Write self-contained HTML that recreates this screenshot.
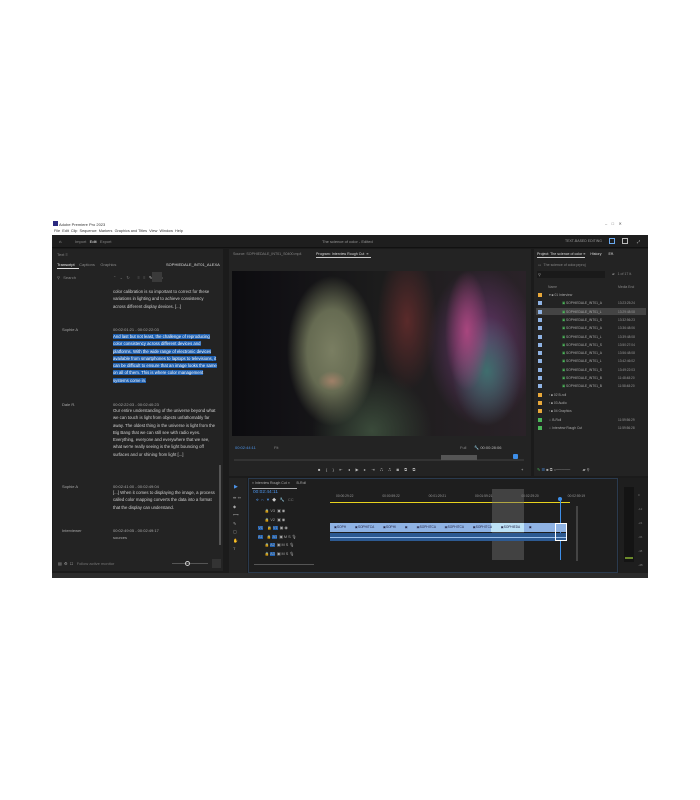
<!DOCTYPE html>
<html><head><meta charset="utf-8"><style>
*{margin:0;padding:0;box-sizing:border-box}
body{width:700px;height:800px;background:#fff;position:relative;overflow:hidden;font-family:"Liberation Sans",sans-serif}
.a{position:absolute}
.t{position:absolute;font-size:4px;color:#bbb;white-space:nowrap;line-height:5px}
.tr{font-size:4.3px;color:#d0d0d0;line-height:7.3px;position:absolute;width:104px}
.hl{background:#1d5fb0;color:#fff}
</style></head><body>
<div class="a" style="left:53px;top:221px;width:5px;height:5px;background:#2b2a80"></div>
<div class="t" style="left:59px;top:222px;color:#333">Adobe Premiere Pro 2023</div>
<div class="t" style="left:54px;top:229px;color:#333;font-size:3.8px">File &nbsp;Edit &nbsp;Clip &nbsp;Sequence &nbsp;Markers &nbsp;Graphics and Titles &nbsp;View &nbsp;Window &nbsp;Help</div>
<div class="t" style="left:605px;top:221px;color:#555">–&nbsp;&nbsp;&nbsp;&nbsp;□&nbsp;&nbsp;&nbsp;&nbsp;✕</div>
<div class="a" style="left:52px;top:235px;width:596px;height:343px;background:#1b1b1b"></div>
<div class="a" style="left:52px;top:235px;width:596px;height:13px;background:#1e1e1e;border-bottom:1px solid #111"></div>
<div class="t" style="left:59px;top:239px;color:#ddd">⌂</div>
<div class="t" style="left:75px;top:239px;color:#888">Import &nbsp;&nbsp;<span style="color:#eee">Edit</span>&nbsp;&nbsp; Export</div>
<div class="t" style="left:322px;top:239px;color:#999">The science of color - Edited</div>
<div class="t" style="left:565px;top:239px;color:#999;font-size:3.5px">TEXT-BASED EDITING</div>
<div class="a" style="left:609px;top:238px;width:6px;height:6px;border:1px solid #6aa9ef"></div>
<div class="a" style="left:622px;top:238px;width:6px;height:6px;border:1px solid #bbb"></div>
<div class="t" style="left:637px;top:239px;color:#bbb">⤢</div>
<div class="a" style="left:53px;top:249px;width:170px;height:322px;background:#232323"></div>
<div class="t" style="left:57px;top:252px;color:#888">Text ≡</div>
<div class="t" style="left:57px;top:262px;color:#eee">Transcript &nbsp;&nbsp;&nbsp;<span style="color:#888">Captions &nbsp;&nbsp;&nbsp;&nbsp;Graphics</span></div>
<div class="t" style="left:166px;top:262px;color:#ddd">SOPHIEDALE_INT01_ALEXA</div>
<div class="a" style="left:57px;top:268px;width:22px;height:1px;background:#ddd"></div>
<div class="t" style="left:57px;top:275px;color:#888">⚲ &nbsp;&nbsp;Search</div>
<div class="t" style="left:113px;top:275px;color:#777">⌃ &nbsp;&nbsp;⌄ &nbsp;&nbsp;↻ &nbsp;&nbsp;&nbsp;&nbsp;&nbsp;&nbsp;≡ &nbsp;&nbsp;≡ &nbsp;&nbsp;<span style="color:#ccc">✎</span> &nbsp;&nbsp;&nbsp;&nbsp;&nbsp;•••</div>
<div class="a" style="left:152px;top:272px;width:10px;height:10px;background:#3a3a3a"></div>
<div class="tr" style="left:113px;top:288px">color calibration is so important to correct for these variations in lighting and to achieve consistency across different display devices. [...]</div>
<div class="t" style="left:62px;top:327px;color:#aaa">Sophie A</div>
<div class="t" style="left:113px;top:327px;color:#aaa">00:02:01:21 - 00:02:22:03</div>
<div class="tr" style="left:113px;top:333px"><span class="hl">And last but not least, the challenge of reproducing color consistency across different devices and platforms. With the wide range of electronic devices available from smartphones to laptops to televisions, it can be difficult to ensure that an image looks the same on all of them. This is where color management systems come in.</span></div>
<div class="t" style="left:62px;top:402px;color:#aaa">Dale R.</div>
<div class="t" style="left:113px;top:402px;color:#aaa">00:02:22:03 - 00:02:40:23</div>
<div class="tr" style="left:113px;top:407px">Our entire understanding of the universe beyond what we can touch is light from objects unfathomably far away. The oldest thing in the universe is light from the Big Bang that we can still see with radio eyes. Everything, everyone and everywhere that we see, what we're really seeing is the light bouncing off surfaces and or shining from light [...]</div>
<div class="t" style="left:62px;top:484px;color:#aaa">Sophie A</div>
<div class="t" style="left:113px;top:484px;color:#aaa">00:02:41:00 - 00:02:49:04</div>
<div class="tr" style="left:113px;top:489px">[...] When it comes to displaying the image, a process called color mapping converts the data into a format that the display can understand.</div>
<div class="t" style="left:62px;top:528px;color:#aaa">Interviewer</div>
<div class="t" style="left:113px;top:528px;color:#aaa">00:02:49:05 - 00:02:49:17</div>
<div class="t" style="left:113px;top:535px;color:#aaa">sources</div>
<div class="a" style="left:219px;top:465px;width:2px;height:80px;background:#555"></div>
<div class="t" style="left:58px;top:561px;color:#aaa">▤ &nbsp;⚙ &nbsp;☐ &nbsp;&nbsp;<span style="color:#777">Follow active monitor</span></div>
<div class="a" style="left:172px;top:563px;width:36px;height:1px;background:#555"></div>
<div class="a" style="left:185px;top:561px;width:5px;height:5px;border:1px solid #ccc;border-radius:50%"></div>
<div class="a" style="left:212px;top:559px;width:9px;height:9px;background:#333"></div>
<div class="a" style="left:229px;top:249px;width:302px;height:227px;background:#232323"></div>
<div class="t" style="left:233px;top:252px;color:#888;font-size:3.6px">Source: SOPHIEDALE_INT01_S0400.mp4</div>
<div class="t" style="left:316px;top:252px;color:#ddd;font-size:3.6px">Program: Interview Rough Cut &nbsp;≡</div>
<div class="a" style="left:316px;top:257px;width:55px;height:1px;background:#ccc"></div>
<div class="a" style="left:232px;top:271px;width:294px;height:165px;background:
radial-gradient(ellipse 14px 10px at 100px 110px,#a08068 0%,rgba(120,100,80,0) 100%),
radial-gradient(ellipse 45px 75px at 100px 80px,#7a7e62 0%,#666b52 55%,rgba(50,54,42,0) 100%),
radial-gradient(ellipse 22px 60px at 235px 60px,#a8467e 0%,rgba(100,50,100,0) 100%),
radial-gradient(ellipse 35px 55px at 255px 100px,#3f6e6e 0%,rgba(40,70,70,0) 100%),
radial-gradient(ellipse 55px 80px at 250px 75px,#6a3870 0%,rgba(60,40,70,0) 100%),
radial-gradient(ellipse 30px 70px at 175px 50px,#5a2a2a 0%,rgba(60,30,30,0) 100%),
radial-gradient(ellipse 60px 60px at 140px 160px,#3a4a3a 0%,rgba(30,40,30,0) 100%),
linear-gradient(90deg,#0c0c0f 0%,#111014 15%,#1c1c1c 50%,#2a2228 100%)"></div>
<div class="t" style="left:235px;top:445px;color:#4c93e8">00:02:44:11</div>
<div class="t" style="left:274px;top:445px;color:#888">Fit</div>
<div class="t" style="left:460px;top:445px;color:#888">Full &nbsp;&nbsp;&nbsp;&nbsp;&nbsp;&nbsp;<span style="color:#bbb">🔧 00:00:28:06</span></div>
<div class="a" style="left:234px;top:459px;width:290px;height:2px;background:#333"></div>
<div class="a" style="left:441px;top:455px;width:36px;height:5px;background:#555"></div>
<div class="a" style="left:513px;top:454px;width:5px;height:5px;background:#3d8ee8;border-radius:1px"></div>
<div class="t" style="left:318px;top:467px;color:#bbb;letter-spacing:5.4px">■{}⇤◂▶▸⇥⎍⎍◙⧉⧉</div>
<div class="t" style="left:521px;top:467px;color:#ccc">+</div>
<div class="a" style="left:534px;top:249px;width:114px;height:227px;background:#232323"></div>
<div class="t" style="left:537px;top:252px;color:#ddd;font-size:3.6px">Project: The science of color ≡ &nbsp;&nbsp;&nbsp;&nbsp;History &nbsp;&nbsp;&nbsp;&nbsp;&nbsp;&nbsp;Eff.</div>
<div class="a" style="left:537px;top:257px;width:48px;height:1px;background:#ccc"></div>
<div class="t" style="left:538px;top:263px;color:#888;font-size:3.6px">▭ &nbsp;The science of color.prproj</div>
<div class="a" style="left:537px;top:271px;width:68px;height:7px;background:#1a1a1a"></div>
<div class="t" style="left:538px;top:272px;color:#999">⚲</div>
<div class="t" style="left:612px;top:272px;color:#888;font-size:3.5px">▰ &nbsp;&nbsp;1 of 17 it.</div>
<div class="t" style="left:548px;top:285px;color:#888;font-size:3.4px">Name</div>
<div class="t" style="left:618px;top:285px;color:#888;font-size:3.4px">Media End</div>
<div id="proj"></div>
<div class="a" style="left:229px;top:478px;width:18px;height:95px;background:#232323"></div>
<div class="t" style="left:234px;top:485px;color:#4c93e8;font-size:5px">▶</div>
<div class="t" style="left:233px;top:494px;color:#aaa;line-height:8.5px;width:8px;white-space:normal">⇹ ⇸ ◆ ⟷ ✎ ▢ ✋ T</div>
<div class="a" style="left:248px;top:478px;width:370px;height:95px;background:#1e1e1e;border:1px solid #2a3a4e"></div>
<div class="t" style="left:252px;top:481px;color:#aaa;font-size:3.5px">× Interview Rough Cut ≡ &nbsp;&nbsp;&nbsp;&nbsp;&nbsp;&nbsp;B-Roll</div>
<div class="a" style="left:252px;top:488px;width:45px;height:1px;background:#aaa"></div>
<div class="t" style="left:253px;top:490px;color:#4c93e8;font-size:4.8px">00:02:44:11</div>
<div class="t" style="left:256px;top:497px;color:#4c93e8">⟡ &nbsp;∩ &nbsp;▼ &nbsp;<span style="color:#ccc">◆ &nbsp;&nbsp;🔧 &nbsp;&nbsp;</span><span style="color:#777">CC</span></div>
<div class="t" style="left:336px;top:494px;color:#999;font-size:3.3px;word-spacing:28px">00:00:29:22 00:00:59:22 00:01:29:21 00:01:59:21 00:02:29:20 00:02:59:19</div>
<div class="a" style="left:330px;top:502px;width:240px;height:1px;background:#e8d31e"></div>
<div class="a" style="left:492px;top:489px;width:32px;height:71px;background:rgba(110,110,110,0.45)"></div>
<div class="a" style="left:560px;top:498px;width:1px;height:62px;background:#3d8ee8"></div>
<div class="a" style="left:558px;top:497px;width:4px;height:4px;background:#3d8ee8;border-radius:50%"></div>
<div class="t" style="left:254px;top:507px;color:#aaa;line-height:8.5px;white-space:pre;font-size:3.8px">          🔒 V3  ▣ ◉
          🔒 V2  ▣ ◉
    <span style="background:#1d5fb0">V1</span>    🔒 <span style="background:#1d5fb0">V1</span>  ▣ ◉
    <span style="background:#1d5fb0">A1</span>    🔒 <span style="background:#1d5fb0">A1</span>  ▣ M S 🎙
          🔒 <span style="background:#1d5fb0">A2</span>  ▣ M S 🎙
          🔒 <span style="background:#1d5fb0">A3</span>  ▣ M S 🎙</div>
<div class="a" style="left:330px;top:523px;width:237px;height:9px;background:#8fb3e4"></div>
<div class="a" style="left:491px;top:523px;width:33px;height:9px;background:#bde2f7"></div>
<div class="t" style="left:334px;top:525px;color:#224;font-size:3.2px;word-spacing:8px">▣SOPH ▣SOPHITCA ▣SOPHI ▣ ▣SOPHITCA ▣SOPHITCA ▣SOPHITCA ▣SOPHIEDA ▣</div>
<div class="a" style="left:330px;top:533px;width:237px;height:8px;background:#2d5a92"></div>
<div class="a" style="left:330px;top:537px;width:237px;height:1px;background:#9cc0ea"></div>
<div class="a" style="left:555px;top:523px;width:12px;height:18px;border:1px solid #fff"></div>
<div class="a" style="left:576px;top:506px;width:2px;height:55px;background:#444"></div>
<div class="a" style="left:254px;top:564px;width:60px;height:1px;background:#555"></div>
<div class="a" style="left:619px;top:478px;width:29px;height:95px;background:#1e1e1e"></div>
<div class="a" style="left:624px;top:487px;width:10px;height:75px;background:#141414"></div>
<div class="a" style="left:625px;top:557px;width:8px;height:2px;background:#6b8a2a"></div>
<div class="t" style="left:638px;top:488px;color:#777;font-size:3px;line-height:14px;white-space:pre">0
-12
-24
-36
-48
-dB</div>
<div class="a" style="left:52px;top:573px;width:596px;height:5px;background:#2b2b2b"></div>
<script>
var rows=[["o","▾ ■ 01 Interview",""],["b","SOPHIEDALE_INT01_A","13:23:25:24"],["b","SOPHIEDALE_INT01_L","13:29:48:08"],["b","SOPHIEDALE_INT01_S","13:32:56:23"],["b","SOPHIEDALE_INT01_A","13:36:48:06"],["b","SOPHIEDALE_INT01_L","13:39:48:08"],["b","SOPHIEDALE_INT01_S","13:50:27:04"],["b","SOPHIEDALE_INT01_A","13:56:48:08"],["b","SOPHIEDALE_INT01_L","13:42:46:02"],["b","SOPHIEDALE_INT01_S","13:49:22:03"],["b","SOPHIEDALE_INT01_B","11:48:48:20"],["b","SOPHIEDALE_INT01_B","11:58:48:20"],["o","› ■ 02 B-roll",""],["o","› ■ 03 Audio",""],["o","› ■ 04 Graphics",""],["g","  ⎍ B-Roll","11:59:56:29"],["g","  ⎍ Interview Rough Cut","11:59:56:28"]];
var h="",c={o:"#e8a83a",b:"#8fb3e4",g:"#4cb85a"};
rows.forEach(function(r,i){var y=293+i*8.3;
if(i==2)h+='<div class="a" style="left:536px;top:'+(y-1.5)+'px;width:110px;height:7px;background:#444"></div>';
h+='<div class="a" style="left:538px;top:'+y+'px;width:4px;height:4px;background:'+c[r[0]]+'"></div>';
h+='<div class="t" style="left:'+(r[0]=="b"?562:549)+'px;top:'+y+'px;color:#aaa;font-size:3.3px">'+(r[0]=="b"?'<span style="color:#4cb85a">▣</span> ':'')+r[1]+'</div>';
h+='<div class="t" style="left:618px;top:'+y+'px;color:#999;font-size:3.2px">'+r[2]+'</div>';});
document.getElementById("proj").innerHTML=h;
</script>
<div class="t" style="left:537px;top:467px;color:#4cb85a">✎ <span style="color:#4c93e8">☰</span> <span style="color:#aaa">■ ⧉ ○───── &nbsp;&nbsp;&nbsp;&nbsp;&nbsp;&nbsp;&nbsp;&nbsp;&nbsp;&nbsp;▰ ⚲</span></div>
</body></html>
